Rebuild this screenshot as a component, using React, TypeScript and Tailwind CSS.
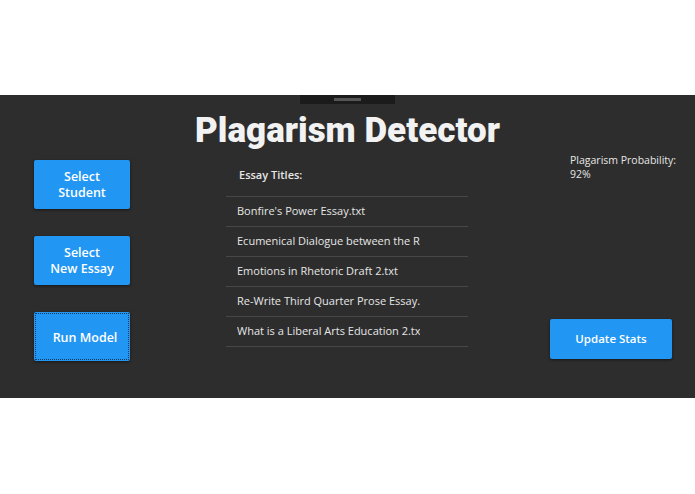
import React from 'react';

const essays = [
  "Bonfire's Power Essay.txt",
  'Ecumenical Dialogue between the Roman Catholic Church.txt',
  'Emotions in Rhetoric Draft 2.txt',
  'Re-Write Third Quarter Prose Essay.txt',
  'What is a Liberal Arts Education 2.txt',
];

const ActionButton = ({ lines, focused = false }: { lines: string[]; focused?: boolean }) => (
  <button
    className={`w-[96px] h-[49px] bg-[#2196f3] rounded-[2px] text-white text-[12.5px] font-semibold leading-[16px] shadow-[0_1px_3px_rgba(0,0,0,0.5)] flex flex-col items-center justify-center ${
      focused ? 'outline outline-1 outline-dotted outline-[#10385e] -outline-offset-2 pl-[6px] pt-[2px]' : ''
    }`}
  >
    {lines.map((l) => (
      <span key={l} className="block">
        {l}
      </span>
    ))}
  </button>
);

export default function App() {
  return (
    <div className="w-[695px] h-[494px] bg-white flex flex-col" style={{ fontFamily: '"Open Sans", "Noto Sans", sans-serif' }}>
      <div className="h-[95px]" />

      {/* main window */}
      <div className="h-[303px] bg-[#2d2d2d] flex flex-col">
        <div className="flex justify-center">
          <div className="w-[95px] h-[9px] bg-[#1b1b1b] flex justify-center items-center">
            <div className="w-[27px] h-[3px] bg-[#555]" />
          </div>
        </div>

        <h1
          className="mt-[7px] h-[40px] text-center text-[35px] leading-[40px] font-black text-[#f2f2f2]"
          style={{ fontFamily: 'Roboto, "Open Sans", sans-serif' }}
        >
          Plagarism Detector
        </h1>

        <div className="flex pl-[34px]">
          {/* actions */}
          <div className="flex flex-col pt-[9px] gap-[27px]">
            <ActionButton lines={['Select', 'Student']} />
            <ActionButton lines={['Select', 'New Essay']} />
            <ActionButton lines={['Run Model']} focused />
          </div>

          {/* essay list */}
          <div className="ml-[96px] w-[242px] flex flex-col">
            <div className="h-[46px] pt-[3px] pl-[13px] flex items-center border-b border-[#474747] text-[11px] font-semibold text-[#e6e6e6]">
              Essay Titles:
            </div>
            {essays.map((title) => (
              <div key={title} className="h-[30px] pl-[11px] flex items-center border-b border-[#474747]">
                <span className="block w-[183px] overflow-hidden whitespace-nowrap text-[11px] text-[#e6e6e6]">{title}</span>
              </div>
            ))}
          </div>

          {/* stats */}
          <div className="ml-[82px] w-[122px] flex flex-col">
            <div className="pl-[20px] pt-[2px] text-[10.5px] leading-[14px] whitespace-nowrap text-[#e6e6e6]">
              <div>Plagarism Probability:</div>
              <div>92%</div>
            </div>
            <button className="mt-[138px] w-[122px] h-[40px] bg-[#2196f3] rounded-[2px] text-white text-[11.5px] font-semibold shadow-[0_1px_3px_rgba(0,0,0,0.5)]">
              Update Stats
            </button>
          </div>
        </div>
      </div>
    </div>
  );
}
